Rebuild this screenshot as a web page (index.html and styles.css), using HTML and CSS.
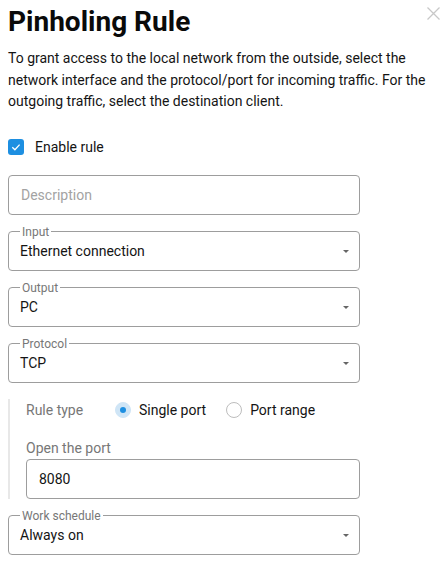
FILE: index.html
```html
<!DOCTYPE html>
<html lang="en">
<head>
<meta charset="utf-8">
<title>Pinholing Rule</title>
<link rel="stylesheet" href="styles.css">
</head>
<body>
<div class="dialog">
  <button class="close" aria-label="Close">
    <svg width="13" height="13" viewBox="0 0 13 13"><path d="M0.5 0.5L12.5 12.5M12.5 0.5L0.5 12.5" stroke="#c8c8c8" stroke-width="1.3" fill="none"/></svg>
  </button>
  <h1 class="title">Pinholing Rule</h1>
  <p class="intro">To grant access to the local network from the outside, select the network interface and the protocol/port for incoming traffic. For the outgoing traffic, select the destination client.</p>

  <label class="check-row">
    <span class="checkbox"><svg width="16" height="16" viewBox="0 0 16 16"><path d="M4.3 8.3L6.9 10.8L11.6 5.6" stroke="#fff" stroke-width="1.3" fill="none"/></svg></span>
    <span>Enable rule</span>
  </label>

  <div class="textbox"><span class="placeholder">Description</span></div>

  <fieldset class="select">
    <legend>Input</legend>
    <div class="select-value"><span>Ethernet connection</span><span class="arrow"></span></div>
  </fieldset>

  <fieldset class="select">
    <legend>Output</legend>
    <div class="select-value"><span>PC</span><span class="arrow"></span></div>
  </fieldset>

  <fieldset class="select">
    <legend>Protocol</legend>
    <div class="select-value"><span>TCP</span><span class="arrow"></span></div>
  </fieldset>

  <div class="subsection">
    <div class="radio-row">
      <span class="radio-label">Rule type</span>
      <label class="radio-option"><span class="radio checked"></span>Single port</label>
      <label class="radio-option"><span class="radio"></span>Port range</label>
    </div>
    <div class="field-label">Open the port</div>
    <div class="textbox inner"><span class="value">8080</span></div>
  </div>

  <fieldset class="select">
    <legend>Work schedule</legend>
    <div class="select-value"><span>Always on</span><span class="arrow"></span></div>
  </fieldset>
</div>
</body>
</html>
```

FILE: styles.css
```css
body {
  margin: 0;
  background: #fff;
  color: #141414;
  font-family: Roboto, "Liberation Sans", sans-serif;
}

.dialog {
  position: relative;
  padding: 5px 8px 0 8px;
}

.close {
  position: absolute;
  top: 7px;
  right: 7px;
  width: 13px;
  height: 13px;
  padding: 0;
  border: 0;
  background: none;
  display: block;
}
.close svg { display: block; }

.title {
  margin: 0;
  font-size: 28px;
  font-weight: 700;
  line-height: 33px;
  color: #0a0a0a;
}

.intro {
  margin: 10px 0 0;
  font-size: 14px;
  line-height: 21.7px;
}

.check-row {
  display: flex;
  align-items: center;
  gap: 11px;
  height: 16px;
  margin-top: 26px;
  font-size: 14px;
}

.checkbox {
  width: 16px;
  height: 16px;
  border-radius: 3px;
  background: #1d8fe1;
  display: block;
}
.checkbox svg { display: block; }

.textbox {
  margin-top: 20px;
  width: 352px;
  height: 40px;
  box-sizing: border-box;
  border: 1px solid #9d9d9d;
  border-radius: 4px;
  display: flex;
  align-items: center;
  padding: 0 12px;
  font-size: 14px;
}
.textbox.inner {
  margin-top: 0;
  width: 100%;
}

.placeholder { color: #a3a3a3; }

.select {
  margin: 8px 0 0;
  padding: 0 11px;
  width: 352px;
  min-width: 0;
  box-sizing: border-box;
  border: 1px solid #9d9d9d;
  border-radius: 4px;
}

.select legend {
  padding: 2px 2px 0;
  font-size: 12px;
  line-height: 14px;
  color: #777;
}

.select-value {
  display: flex;
  align-items: center;
  justify-content: space-between;
  height: 22px;
  line-height: 22px;
  padding: 1px 0 8px;
  font-size: 14px;
}

.arrow {
  width: 0;
  height: 0;
  border-left: 3px solid transparent;
  border-right: 3px solid transparent;
  border-top: 3px solid #666;
  margin-right: -1px;
}

.subsection {
  margin-top: 16px;
  width: 352px;
  box-sizing: border-box;
  border-left: 2px solid #e8e8e8;
  padding-left: 16px;
}

.radio-row {
  display: flex;
  align-items: center;
  gap: 20px;
  height: 22px;
  font-size: 14px;
}

.radio-label {
  width: 69px;
  color: #777;
}

.radio-option {
  display: flex;
  align-items: center;
  gap: 8px;
}

.radio {
  width: 16px;
  height: 16px;
  box-sizing: border-box;
  border-radius: 50%;
  border: 1px solid #bdbdbd;
  background: #fff;
  display: flex;
  align-items: center;
  justify-content: center;
}
.radio.checked {
  border-color: #cfe5f6;
  background: #cfe5f6;
}
.radio.checked::after {
  content: "";
  width: 6px;
  height: 6px;
  border-radius: 50%;
  background: #1d8fe1;
}

.field-label {
  margin-top: 17px;
  margin-bottom: 1px;
  font-size: 14px;
  line-height: 20px;
  color: #777;
}
```
